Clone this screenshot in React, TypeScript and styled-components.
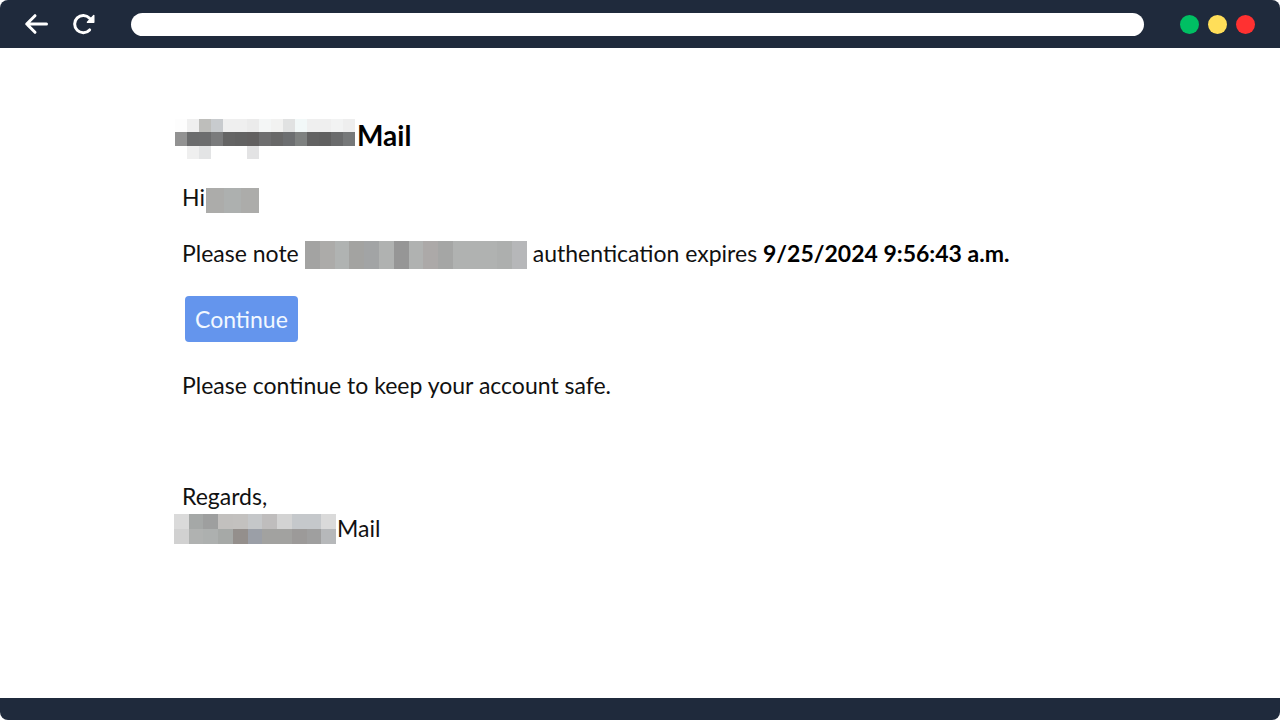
import React from "react";
import styled, { createGlobalStyle } from "styled-components";

const GlobalStyle = createGlobalStyle`
  *, *::before, *::after { box-sizing: border-box; }
  body { margin: 0; background: #fff; }
`;

const Window = styled.div`
  display: flex;
  flex-direction: column;
  min-height: 100vh;
  border-radius: 8px;
  overflow: hidden;
  background: #fff;
  color: #111;
  font-family: Lato, "Liberation Sans", sans-serif;
`;

const Toolbar = styled.header`
  display: flex;
  align-items: center;
  height: 48px;
  padding: 0 25px 0 24px;
  background: #1f2a3c;
`;

const IconButton = styled.button`
  display: flex;
  margin: 0 24px 0 0;
  padding: 0;
  border: 0;
  background: none;
  color: #fff;
  cursor: pointer;
`;

const AddressBar = styled.input`
  flex: 1;
  min-width: 0;
  height: 23px;
  margin: 0 36px 0 11px;
  padding: 0 12px;
  border: 0;
  border-radius: 12px;
  background: #fff;
  font: inherit;
`;

const Lights = styled.div`
  display: flex;
  gap: 9px;
`;

const Light = styled.span<{ $color: string }>`
  width: 19px;
  height: 19px;
  border-radius: 50%;
  background: ${(p) => p.$color};
`;

const Message = styled.main`
  flex: 1;
  padding: 71px 48px 48px 174px;
  font-size: 23px;
  line-height: 32px;
`;

const Title = styled.h1`
  display: flex;
  align-items: flex-start;
  gap: 2px;
  margin: 0 0 22px;
  padding-left: 1px;
  font-size: 28px;
  line-height: 32px;
  font-weight: 700;
  color: #000;
`;

const Line = styled.p<{ $gap?: number; $flush?: boolean }>`
  display: flex;
  align-items: flex-end;
  flex-wrap: wrap;
  gap: ${(p) => p.$gap ?? 0}px;
  margin: 0 0 24px;
  padding-left: ${(p) => (p.$flush ? 0 : 8)}px;

  b {
    color: #000;
  }
`;

const Continue = styled.button`
  display: block;
  height: 46px;
  margin: 27px 0 27px 11px;
  padding: 0 10px;
  border: 0;
  border-radius: 4px;
  background: #6495ed;
  color: #f2f8ff;
  font: inherit;
  cursor: pointer;
`;

const Signature = styled.footer`
  margin-top: 79px;

  ${Line} {
    margin: 0;
  }
`;

const StatusBar = styled.div`
  height: 22px;
  background: #1f2a3c;
`;

const MosaicSvg = styled.svg`
  display: block;
  flex: none;
`;

function Mosaic({ rows, width, height }: { rows: string[]; width: number; height: number }) {
  const grid = rows.map((row) => row.split(" "));
  return (
    <MosaicSvg
      width={width}
      height={height}
      viewBox={`0 0 ${grid[0].length} ${grid.length}`}
      preserveAspectRatio="none"
      shapeRendering="crispEdges"
      aria-hidden="true"
    >
      {grid.map((cells, y) =>
        cells.map((c, x) =>
          c === "-" ? null : <rect key={`${x}-${y}`} x={x} y={y} width="1" height="1" fill={`#${c}`} />
        )
      )}
    </MosaicSvg>
  );
}

const titleCells = [
  "fdfdfd efefef bebebb c8cbce efefef efefef ebebeb f4f6f6 f2f2f1 e1e2e2 f2f8f8 efefef efefef f2f3f3 eeeeee",
  "929292 6b6c6d 6c6d6e 7a7b7c 646464 626262 626060 6e6e6f 686868 6c6e70 7e8180 626262 606060 6a6b6c 767879",
  "- efefef e3e4e5 - - - e3e3e4 - - - - - - - -",
];
const nameCells = ["acacaa adb0af acacaa"];
const accountCells = [
  "a3a3a2 acaba9 b0b3b2 a3a3a1 a2a4a5 b0b2b1 969696 b0b2b1 aca9a8 a5a6a5 b0b2b1 b0b2b1 b0b2b1 adafae b6b7b9",
];
const senderCells = [
  "dadada a5a8a7 9e9f9f c2c0be c3c1bf c5c7c9 bfbdbd d3d3d3 c5c8cb c5c8cb dadada",
  "d1d1d1 b0b2b1 adb0af a6a9a7 948f8c 9b9fa7 a2a2a0 a2a2a0 9c9a99 9f9f9f b6b8ba",
];

export default function App() {
  return (
    <>
      <GlobalStyle />
      <Window>
        <Toolbar>
          <IconButton type="button" aria-label="Back">
            <svg width="25" height="24" viewBox="0 0 25 24" fill="none" stroke="currentColor" strokeWidth="3" strokeLinecap="round" strokeLinejoin="round">
              <path d="M11 3.7 2.7 12 11 20.3M3 12h19.5" />
            </svg>
          </IconButton>
          <IconButton type="button" aria-label="Reload">
            <svg width="23" height="24" viewBox="0 0 23 24" fill="none" stroke="currentColor" strokeWidth="3" strokeLinecap="round">
              <path d="M16.6 17.9A8.6 8.6 0 1 1 16.6 6.3" />
              <path d="M20.8 3.5V10.2H14.4Z" fill="currentColor" strokeWidth="1.4" strokeLinejoin="round" />
            </svg>
          </IconButton>
          <AddressBar type="text" aria-label="Address" />
          <Lights>
            <Light $color="#00bf63" />
            <Light $color="#ffde59" />
            <Light $color="#ff3131" />
          </Lights>
        </Toolbar>
        <Message>
          <Title>
            <Mosaic rows={titleCells} width={180} height={40} />
            Mail
          </Title>
          <Line $gap={1}>
            Hi
            <Mosaic rows={nameCells} width={53} height={25} />
          </Line>
          <Line $gap={6}>
            <span>Please note</span>
            <Mosaic rows={accountCells} width={222} height={28} />
            <span>
              authentication expires <b>9/25/2024 9:56:43 a.m.</b>
            </span>
          </Line>
          <Continue type="button">Continue</Continue>
          <Line>Please continue to keep your account safe.</Line>
          <Signature>
            <Line>Regards,</Line>
            <Line $flush $gap={1}>
              <Mosaic rows={senderCells} width={162} height={30} />
              Mail
            </Line>
          </Signature>
        </Message>
        <StatusBar />
      </Window>
    </>
  );
}
